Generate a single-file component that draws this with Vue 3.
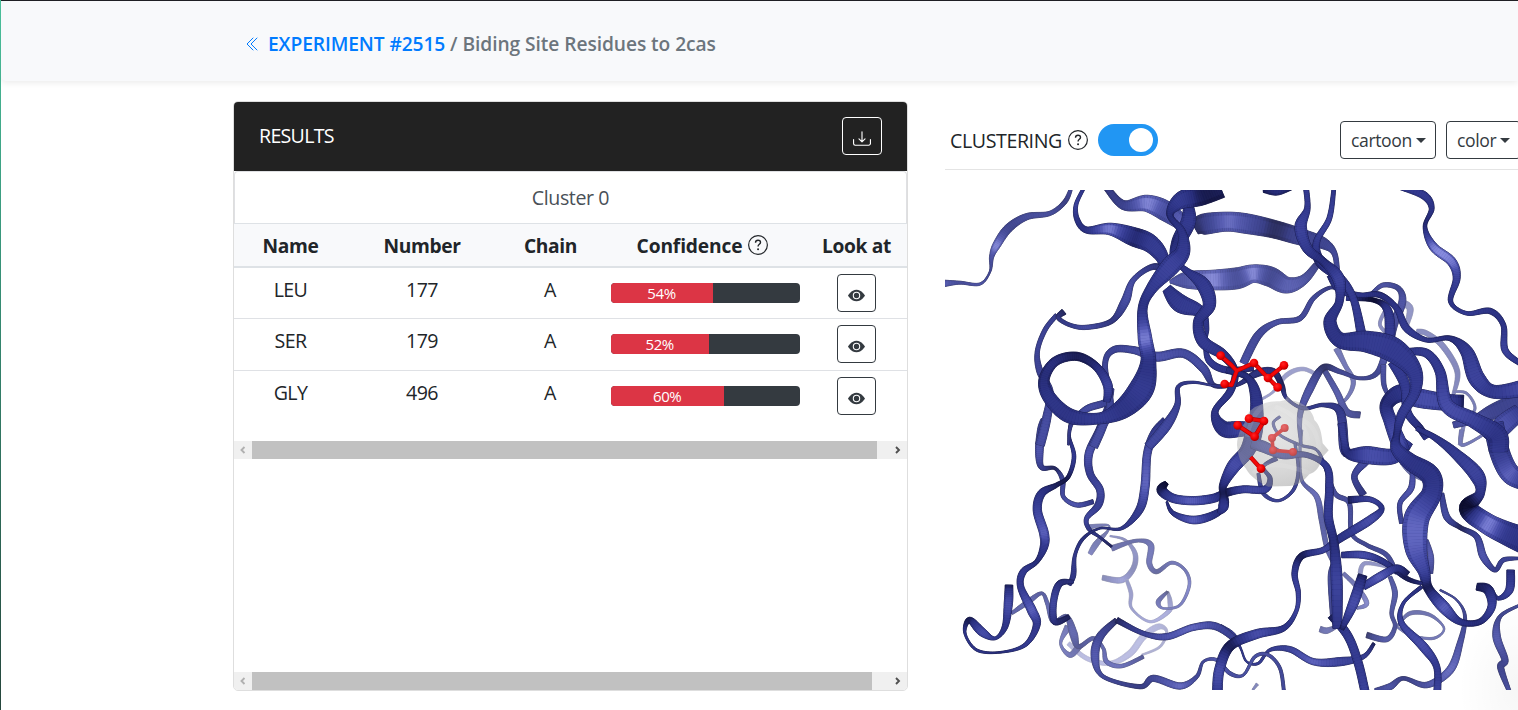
<script setup>
const rows = [
  { name: 'LEU', number: 177, chain: 'A', confidence: 54 },
  { name: 'SER', number: 179, chain: 'A', confidence: 52 },
  { name: 'GLY', number: 496, chain: 'A', confidence: 60 },
]

// Backbone ribbons, back to front: [tile, fog, "x,y,width,shade ..."].
// Tiles are the four quadrants of the viewport; shade runs from 0 (shadow) to 9 (highlight).
const tiles = [[0, 0], [840, 0], [0, 735], [840, 735]]
const strands = [
  [2, .45, '487,443,16,2 545,450,18,7 580,415,16,3 585,370,14,5 555,330,8,4 510,318,5,5'],
  [2, .35, '450,372,14,6 470,340,18,4 505,300,6,3 500,285,6,4 440,292,16,4'],
  [2, .6, '385,640,14,6 440,685,14,7 510,700,14,7 570,670,20,7 610,620,20,7 655,590,18,6 680,605,8,4 660,650,8,4 605,675,6,4'],
  [2, .5, '560,450,10,4 573,490,12,5 575,535,8,5 630,575,8,7 685,545,14,7 690,515,14,5 683,485,8,1'],
  [2, .3, '683,485,8,1 655,515,14,5 670,535,6,6 720,525,8,6 748,465,9,7 735,420,9,5 695,398,10,5 650,425,14,2 628,400,16,5 632,345,18,5 590,332,10,3 515,355,18,4'],
  [2, .3, '385,590,22,5 362,640,8,6 390,675,16,5 420,645,20,3'],
  [2, .22, '215,550,10,4 265,515,16,5 305,490,10,3 322,520,12,5 340,575,14,5 380,560,14,3 400,610,24,5 415,650,14,2 460,625,12,4 490,655,10,5 500,695,14,6 545,708,12,6 610,680,12,2'],
  [3, .45, '420,430,14,5 435,400,12,5 500,410,8,4'],
  [3, .3, '370,430,12,4 410,470,14,5 440,520,14,7 410,535,8,5'],
  [3, .3, '300,597,18,3 320,602,18,5 350,590,10,3'],
  [3, .3, '530,590,6,4 570,550,12,4 630,555,10,4 672,595,6,5 640,625,8,5 570,615,6,5 530,590,6,4'],
  [3, .4, '98,780,6,4 112,762,10,4'],
  [1, .5, '120,645,8,5 160,620,8,5 200,570,14,5 250,552,12,5 300,575,12,4'],
  [1, .4, '590,440,16,5 620,445,16,5 670,485,18,5 712,560,16,4 700,630,10,5'],
  [1, .35, '700,620,6,5 740,625,8,4 765,670,8,4 735,710,10,5 720,780,12,6'],
  [1, .45, '540,350,20,5 570,370,20,5 560,420,14,5'],
  [1, .3, '350,490,20,5 375,540,14,5 400,590,14,5 380,640,10,5 340,670,8,4'],
  [1, .4, '500,370,12,5 480,420,10,5 520,460,14,5'],
  [3, .3, '545,100,10,4 570,130,8,3 605,150,5,3'],
  [3, .3, '725,0,14,5 725,45,10,5 780,20,8,5 815,-10,14,5'],
  [3, .15, '510,440,12,4 525,490,16,5 515,550,12,4 525,590,12,3 500,628,16,5 440,615,18,1'],
  [3, .1, '180,-40,8,4 160,-20,8,4 180,15,8,4 240,45,8,4 290,60,8,4 315,110,10,4 345,190,14,4 388,220,14,4 395,310,12,4 440,345,12,3 500,375,14,4 530,430,12,3'],
  [3, .2, '245,0,8,5 240,60,8,5 245,150,10,4 290,200,16,6 305,270,16,4 320,350,14,5 340,400,10,4'],
  [3, .05, '115,130,10,3 130,190,12,4 175,212,8,4 220,180,10,4 235,120,9,4 225,40,8,4'],
  [3, .1, '345,395,16,3 330,440,12,4 338,560,14,3'],
  [1, .15, '310,550,16,2 350,620,18,5 380,680,20,4 420,690,20,2'],
  [1, .1, '455,325,10,3 490,300,14,5 535,310,16,3 547,350,22,5 520,420,26,4 500,500,24,6 470,565,16,3 420,580,10,3 360,560,14,3 310,548,20,1 270,610,24,5 240,690,16,5 243,780,8,5'],
  [1, .1, '490,540,16,5 492,600,14,4 510,640,10,3'],
  [3, .05, '435,95,26,5 403,140,18,4 430,195,22,2'],
  [3, .05, '575,95,10,3 575,170,18,6 540,220,14,5 545,280,14,4'],
  [3, .05, '665,190,14,3 680,260,20,5 720,292,14,1 770,320,18,4 790,380,22,6 825,420,14,3 850,390,14,4 900,385,8,3'],
  [3, .1, '620,330,10,4 632,380,18,6 630,430,18,3'],
  [3, .1, '660,480,6,3 710,510,6,4 735,560,10,3 720,640,18,5 690,720,24,7 620,765,18,5 550,745,12,2 510,770,20,5 465,780,10,3'],
  [3, 0, '605,470,12,2 550,520,10,4 545,580,18,5 610,650,28,6 650,710,20,4 652,785,22,5'],
  [3, .1, '900,525,8,4 840,560,12,3 830,620,24,6 855,690,20,4 842,712,20,3 868,785,12,5'],
  [3, 0, '872,420,24,2 868,480,24,5 835,505,12,3 812,480,16,3'],
  [3, .02, '0,590,16,5 40,615,14,5 62,655,6,3 80,695,6,4 115,700,8,4 150,660,10,4 210,658,18,5 280,695,20,7 360,695,26,5 430,680,14,4 462,640,10,1'],
  [2, .08, '530,570,16,1 480,620,24,4 465,680,24,6 490,740,12,4 600,770,14,2 640,745,20,4 720,768,20,7 770,740,12,4 790,695,8,4 830,690,10,6 870,730,12,5 910,735,8,5 945,680,10,5 985,675,10,5 1020,715,10,4 1032,785,10,4'],
  [2, .04, '530,570,18,1 610,610,14,4 680,620,20,6 760,592,20,7 830,590,22,5 900,640,16,3'],
  [2, .05, '315,-30,26,4 305,0,26,4 298,65,24,6 305,112,16,3 345,115,10,1 368,150,14,4 370,200,12,5 410,225,14,6 460,215,14,2'],
  [2, .03, '510,-75,26,3 480,0,26,4 447,70,24,6 450,130,22,4 480,180,22,5 475,225,22,4 440,265,14,5 448,298,12,3 480,322,8,2 515,350,8,1'],
  [2, .02, '680,-25,34,3 645,10,28,4 622,70,24,6 615,170,26,7 598,240,24,4 545,295,10,3 480,295,6,2 430,325,10,2 405,375,10,3 400,435,16,3 388,465,12,2'],
  [2, .02, '400,455,10,2 358,462,20,2 340,520,20,5 345,575,20,2 388,560,14,1'],
  [2, 0, '390,-20,6,2 388,20,8,2 402,80,12,4 385,140,12,1 350,165,14,1 305,190,24,3 292,240,26,5 312,310,28,7 312,350,24,4 290,395,14,2 250,425,20,4 242,470,20,4 275,540,28,7 290,585,22,4 255,645,12,4 180,667,6,2 110,660,8,3 75,610,8,3 88,570,18,1 125,605,26,6 165,625,10,4 195,590,18,3 205,520,26,6 207,465,24,1'],
  [1, .08, '900,650,60,3 820,680,46,3 760,705,24,5 700,720,20,4'],
  [1, .03, '900,680,50,4 850,720,60,6 810,770,50,3'],
  [1, .08, '70,535,24,5 115,450,24,4 170,412,16,5 240,400,16,4 280,340,14,4 330,308,10,2 370,320,8,3'],
  [0, .1, '15,295,20,6 60,293,10,4 120,297,8,5 150,260,6,3 155,215,14,5 170,180,24,8 205,130,26,3 260,95,20,4 330,85,14,4 375,50,14,2 395,5,10,4'],
  [0, .12, '690,290,10,5 740,285,50,5 820,285,60,8 890,280,64,4 940,266,54,8 990,275,60,3 1040,300,50,6 1090,285,30,5 1130,240,20,2'],
  [0, .08, '765,130,40,1 790,118,62,2 860,110,58,7 920,116,60,5 1000,132,54,1 1080,155,50,3 1150,175,34,3 1185,210,16,4 1192,290,18,3'],
  [0, .07, '500,8,20,2 550,60,28,3 620,55,50,8 680,80,60,5 730,120,40,7 745,150,10,3'],
  [0, .05, '300,780,28,5 320,700,26,5 330,620,20,4 300,560,20,4 292,500,14,4 315,435,14,4 350,390,14,3'],
  [0, .05, '372,380,20,1 355,398,14,2 390,420,12,3 440,427,14,5 515,408,16,2 555,350,26,5 580,285,16,5 640,245,18,2 690,265,30,3'],
  [0, .05, '385,780,6,2 395,715,12,3 440,672,20,5 500,650,20,4 516,610,14,3'],
  [0, .05, '460,785,28,5 487,725,26,5 510,660,22,4 495,540,16,4 520,495,20,4 580,495,22,5 650,515,28,6 730,505,26,5 790,550,26,5 820,600,14,2 870,603,10,3'],
  [0, .03, '625,785,28,5 680,720,30,5 712,660,18,4 715,605,12,3 760,592,8,3 830,603,6,3 890,600,10,2 950,565,22,2 1000,560,20,2 1025,600,16,1 1040,640,10,3 1090,670,10,3 1150,660,12,3 1200,680,24,3 1212,785,28,5 1222,810,20,2'],
  [0, 0, '432,8,10,3 408,60,12,5 412,105,16,3 440,135,20,3 510,132,36,8 580,155,56,2 630,175,54,4 665,215,40,4 672,260,16,2'],
  [0, 0, '680,310,30,3 720,355,54,4 780,380,34,4 800,430,14,3 795,480,10,3 810,530,20,4 860,555,20,3 940,550,16,2'],
  [1, 0, '130,18,10,1 170,16,30,2 215,10,10,1'],
  [1, 0, '540,8,12,3 610,30,24,4 635,70,16,3 615,125,12,2 640,185,26,8 695,230,28,8 710,280,22,5 692,350,14,3 740,385,12,4 810,378,18,3 850,420,16,3 855,495,20,5 900,535,16,3'],
  [3, 0, '365,-20,24,4 372,30,20,4 385,70,30,2 440,75,52,6 520,78,46,5 560,30,44,4'],
  [1, 0, '548,800,44,4 535,770,46,6 512,710,40,5 500,660,40,2 540,625,52,3 600,640,56,6 680,652,50,5 730,655,50,1'],
  [1, 0, '520,530,34,4 555,600,30,4 562,680,24,4 600,730,22,2 620,760,20,3'],
  [3, 0, '590,-5,14,3 640,20,18,3 700,65,30,4 770,135,44,5 780,190,28,3 745,235,56,0 800,280,62,8 860,310,70,4 910,330,80,3'],
  [3, .02, '820,-20,60,4 840,70,60,4 870,130,60,7 910,150,60,4'],
  [1, 0, '380,335,24,3 460,345,14,0 500,370,24,3 510,430,30,4 505,520,28,3'],
  [1, 0, '330,270,20,2 360,315,22,3 420,330,14,3 480,330,18,2 530,370,18,3 560,430,22,4 620,465,14,3 690,460,16,2 740,500,38,4 770,580,50,5 820,620,40,4 910,610,50,6'],
  [1, 0, '560,500,20,3 620,505,26,4 660,560,30,4 680,660,42,6 760,705,46,5 830,750,60,3 835,800,56,4'],
  [1, 0, '342,8,12,3 328,100,16,5 290,170,20,4 300,230,30,2 360,280,28,4 400,340,22,4 425,450,28,4'],
  [1, 0, '258,8,16,4 262,70,18,4 242,125,36,5 262,190,30,4 310,230,24,2 355,280,36,5 358,350,24,3 330,410,38,3 360,465,46,3 440,470,64,4 520,495,74,4 580,555,50,4 585,620,32,4 545,690,28,4 530,750,20,2 530,790,36,4 570,830,50,3 630,870,60,3 635,925,60,4 590,1000,76,7 588,1090,66,7 612,1160,36,5 625,1210,28,1 670,1265,36,7 720,1310,20,3 780,1310,18,2 815,1265,24,5 805,1215,30,2 770,1205,22,1'],
  [0, 0, '745,60,30,2 745,110,44,4 715,170,40,2 700,220,16,3 740,258,20,3 790,300,42,4 808,360,38,4 775,410,30,3 790,470,36,4 850,510,30,3 885,560,20,2 870,620,22,3 825,680,20,3 850,730,46,3 900,732,46,5 960,728,30,3'],
  [0, 0, '840,5,70,1 780,30,64,1 720,48,50,4 690,90,20,2 725,140,24,3 728,200,44,4 690,245,56,5 635,310,34,4 608,370,28,3 615,460,42,8 625,530,46,3 605,610,74,4 550,670,60,3 480,700,34,4 390,693,44,3 330,640,40,3 312,585,32,2 345,530,28,2 410,514,26,1 468,544,24,2 503,600,28,5 500,650,20,3'],
  [2, 0, '680,215,6,2 700,250,14,3 760,270,24,7 820,255,22,3 858,225,14,2 855,185,10,2'],
  [2, 0, '680,158,14,0 665,180,30,1 700,205,26,5 760,212,26,7 820,205,26,4 860,188,24,1 910,178,22,5 975,178,22,5 990,145,14,3 970,110,10,3 1010,85,14,3'],
  [3, 0, '-8,790,30,4 -2,720,30,6 30,648,30,1 110,612,28,6 190,595,18,3 228,545,12,5 235,490,14,5 224,430,18,4 245,378,20,1 310,360,18,5 360,325,24,3 450,270,26,6 485,235,16,3 450,208,16,5 385,210,22,1'],
  [3, 0, '365,375,18,3 430,375,22,6 490,395,18,3 560,445,14,1 605,460,10,2'],
  [3, 0, '430,470,22,4 480,440,26,7 530,415,22,3 562,435,24,1'],
  [3, 0, '335,555,28,1 385,620,26,4 415,700,26,4 435,785,26,5'],
  [1, 0, '20,555,20,2 80,575,20,2 105,620,32,3 110,690,40,3 100,750,50,3 80,800,44,4 40,845,40,6 10,900,24,2 10,930,20,1 10,965,30,4 -5,985,10,2'],
  [3, 0, '95,40,30,4 130,50,34,5 190,75,24,5 260,75,16,4 320,110,20,4 328,180,24,4 325,260,26,4 342,340,26,2 350,450,34,5 352,595,28,3'],
  [3, 0, '365,598,14,1 400,520,30,6 428,435,28,1'],
]

const palette = [[13, 14, 46], [42, 48, 126], [54, 61, 147], [76, 82, 174], [142, 146, 228]]
const toned = (shade, fog) => {
  const t = Math.max(0, Math.min(3.999, (shade / 9) * 4))
  const i = Math.floor(t)
  const k = t - i
  const rgb = palette[i].map((c, n) => {
    const mixed = c + (palette[i + 1][n] - c) * k
    return Math.round(mixed + (255 - mixed) * fog)
  })
  return `rgb(${rgb.join(',')})`
}

const spline = (a, b, c, d, t) =>
  0.5 * (2 * b + (c - a) * t + (2 * a - 5 * b + 4 * c - d) * t * t + (3 * b - a - 3 * c + d) * t * t * t)

const fmt = (p) => p[0].toFixed(1) + ' ' + p[1].toFixed(1)

const ribbons = strands.map(([tile, fog, text]) => {
  const [ox, oy] = tiles[tile]
  const pts = text.split(' ').map((s) => {
    const [x, y, w, shade] = s.split(',').map(Number)
    return [x + ox, y + oy, w, shade]
  })
  const line = []
  for (let i = 0; i < pts.length - 1; i++) {
    const a = pts[i - 1] || pts[i]
    const b = pts[i]
    const c = pts[i + 1]
    const d = pts[i + 2] || c
    const steps = 10
    for (let j = 0; j < steps; j++) line.push([0, 1, 2, 3].map((n) => spline(a[n], b[n], c[n], d[n], j / steps)))
  }
  line.push(pts[pts.length - 1])
  const sides = line.map((p, i) => {
    const q = line[Math.max(0, i - 1)]
    const r = line[Math.min(line.length - 1, i + 1)]
    const len = Math.hypot(r[0] - q[0], r[1] - q[1]) || 1
    const nx = -(r[1] - q[1]) / len
    const ny = (r[0] - q[0]) / len
    const h = Math.max(1.7, p[2] / 2 - 0.6)
    const at = (k) => [p[0] + nx * h * k, p[1] + ny * h * k]
    return { l: at(1), r: at(-1), li: at(0.65), ri: at(-0.65), shade: p[3] }
  })
  const facets = sides.slice(0, -1).map((s, i) => {
    const n = sides[i + 1]
    const shade = (s.shade + n.shade) / 2
    return {
      edge: `M${fmt(s.l)}L${fmt(n.l)}L${fmt(n.r)}L${fmt(s.r)}Z`,
      core: `M${fmt(s.li)}L${fmt(n.li)}L${fmt(n.ri)}L${fmt(s.ri)}Z`,
      dark: toned(shade * 0.86, fog),
      light: toned(shade + 0.2, fog),
    }
  })
  const outline = 'M' + sides.map((s) => fmt(s.l)).join('L') + 'L' + sides.slice().reverse().map((s) => fmt(s.r)).join('L') + 'Z'
  return { outline, line: toned(0.6, Math.min(0.8, fog * 1.4)), facets }
})

const frontAtoms = [[62, 47], [162, 69], [204, 114], [252, 76], [233, 142], [74, 132], [147, 236], [192, 243], [164, 290], [113, 256], [183, 386]]
const backAtoms = [[254, 264], [216, 294], [219, 331], [279, 336]]
</script>

<template>
  <div class="page">
    <header class="topbar">
      <svg class="back" viewBox="0 0 16 16" fill="none" stroke="currentColor" stroke-linecap="round" stroke-linejoin="round"><path d="M8 2 2 8l6 6M12 2 6 8l6 6" /></svg>
      <h1><a>EXPERIMENT #2515</a><span class="crumb"> / Biding Site Residues to 2cas</span></h1>
    </header>

    <main>
      <section class="card">
        <div class="card-head">
          <span class="results">RESULTS</span>
          <button class="download">
            <svg viewBox="0 0 16 16" fill="none" stroke="currentColor" stroke-linecap="round" stroke-linejoin="round"><path d="M.5 8.5V12A1.5 1.5 0 0 0 2 13.5h12a1.5 1.5 0 0 0 1.5-1.5V8.5M8 1.5v9M5.3 7.9 8 10.6l2.7-2.7" /></svg>
          </button>
        </div>
        <div class="cluster"><span>Cluster 0</span></div>
        <div class="grid head">
          <span>Name</span><span>Number</span><span>Chain</span>
          <span class="conf"><span>Confidence</span>
            <svg class="help" viewBox="0 0 16 16"><circle cx="8" cy="8" r="7.5" fill="none" stroke="currentColor" stroke-width=".95" /><path d="M6 6.1C6 4.8 6.8 4.2 8 4.2s2 .7 2 1.7c0 1.5-1.95 1.5-1.95 3.2" fill="none" stroke="currentColor" stroke-width="1.1" /><circle cx="8.05" cy="11.3" r=".8" fill="currentColor" /></svg>
          </span>
          <span>Look at</span>
        </div>
        <div v-for="row in rows" :key="row.number" class="grid row">
          <span class="cell">{{ row.name }}</span>
          <span class="cell">{{ row.number }}</span>
          <span class="cell">{{ row.chain }}</span>
          <div class="progress"><div class="bar" :style="{ width: row.confidence + '%' }">{{ row.confidence }}%</div></div>
          <button class="look">
            <svg viewBox="0 0 16 16" fill="currentColor"><path fill-rule="evenodd" d="M0 8s3-5.5 8-5.5S16 8 16 8s-3 5.5-8 5.5S0 8 0 8zm8 3.5a3.5 3.5 0 1 0 0-7 3.5 3.5 0 0 0 0 7z" /><circle cx="8" cy="8" r="2.5" /></svg>
          </button>
        </div>
        <div class="scroll first">
          <span class="arrow"><svg viewBox="0 0 8 8"><path d="M5.5 1 2.5 4l3 3" /></svg></span>
          <span class="thumb"></span>
          <span class="arrow end"><svg viewBox="0 0 8 8"><path d="M2 1l3 3-3 3" /></svg></span>
        </div>
        <div class="scroll last">
          <span class="arrow"><svg viewBox="0 0 8 8"><path d="M5.5 1 2.5 4l3 3" /></svg></span>
          <span class="thumb"></span>
          <span class="arrow end"><svg viewBox="0 0 8 8"><path d="M2 1l3 3-3 3" /></svg></span>
        </div>
      </section>

      <section class="viewer">
        <div class="tools">
          <span class="title">CLUSTERING</span>
          <svg class="help" viewBox="0 0 16 16"><circle cx="8" cy="8" r="7.5" fill="none" stroke="currentColor" stroke-width=".95" /><path d="M6 6.1C6 4.8 6.8 4.2 8 4.2s2 .7 2 1.7c0 1.5-1.95 1.5-1.95 3.2" fill="none" stroke="currentColor" stroke-width="1.1" /><circle cx="8.05" cy="11.3" r=".8" fill="currentColor" /></svg>
          <span class="switch"><i></i></span>
          <button class="drop cartoon"><span>cartoon</span><i></i></button>
          <button class="drop color"><span>color</span><i></i></button>
        </div>
        <svg class="scene" viewBox="15 15 1719 1500">
          <defs>
            <radialGradient id="blob" cx=".42" cy=".35" r=".7">
              <stop offset="0" stop-color="#c9c9c9" /><stop offset=".7" stop-color="#a6a6a6" /><stop offset="1" stop-color="#8a8a8a" />
            </radialGradient>
            <radialGradient id="atom" cx=".4" cy=".35" r=".65">
              <stop offset="0" stop-color="#ff2626" /><stop offset=".6" stop-color="#f20000" /><stop offset="1" stop-color="#b00000" />
            </radialGradient>
          </defs>
          <g v-for="(ribbon, i) in ribbons" :key="i">
            <path :d="ribbon.outline" :fill="ribbon.line" :stroke="ribbon.line" stroke-width="2.6" stroke-linejoin="round" />
            <path v-for="(f, j) in ribbon.facets" :key="'e' + j" :d="f.edge" :fill="f.dark" :stroke="f.dark" stroke-width=".5" />
            <path v-for="(f, j) in ribbon.facets" :key="'c' + j" :d="f.core" :fill="f.light" :stroke="f.light" stroke-width=".7" />
          </g>
          <g transform="translate(780 465)">
            <path d="M254 264 216 294 219 331 279 336" fill="none" stroke="#e40000" stroke-width="11" />
            <circle v-for="(a, i) in backAtoms" :key="i" :cx="a[0]" :cy="a[1]" r="12" fill="url(#atom)" />
            <path d="M111 315 C112 285 122 265 136 245 Q142 205 180 195 Q208 182 240 184 L256 180 Q258 170 263 168 L272 181 Q303 184 324 205 Q340 222 343 240 C360 255 365 280 368 310 L386 331 L368 350 C358 385 347 395 328 403 Q300 438 270 438 L205 440 C180 430 150 410 137 385 Q115 365 111 315Z" fill="url(#blob)" opacity=".45" />
            <path d="M140 290Q165 170 265 184M225 200Q310 230 324 300M300 240Q350 250 358 330M160 400Q200 350 330 400" fill="none" stroke="#fff" stroke-width="14" opacity=".1" />
            <path d="M62 47 94 75 110 92 162 69 204 114 252 76M204 114 233 142M110 92 95 135 74 132M147 236 192 243 164 290 113 256M152 352 183 386" fill="none" stroke="#b60000" stroke-width="13" stroke-linejoin="round" />
            <path d="M62 47 94 75 110 92 162 69 204 114 252 76M204 114 233 142M110 92 95 135 74 132M147 236 192 243 164 290 113 256M152 352 183 386" fill="none" stroke="#f20808" stroke-width="9" stroke-linejoin="round" />
            <circle v-for="(a, i) in frontAtoms" :key="i" :cx="a[0]" :cy="a[1]" r="13" fill="url(#atom)" />
          </g>
        </svg>
      </section>
    </main>
    <div class="glow"></div>
  </div>
</template>

<style>
body { margin: 0; overflow: hidden; background: #fff; }
</style>

<style scoped>
.page { position: relative; width: 1518px; height: 710px; overflow: hidden; background: #fff; color: #212529; font-family: "Open Sans", "Noto Sans", sans-serif; font-size: 19.6px; box-sizing: border-box; padding-left: 1px; }
.page::before { content: ""; position: absolute; left: 0; top: 0; width: 1px; height: 710px; background: linear-gradient(#4abf9a, #38957a 35%, #25463c); }
.page * { box-sizing: border-box; }
button { font-family: inherit; background: transparent; padding: 0; }
.topbar { height: 81px; border-top: 1px solid #1f1f24; background: #f8f9fb; border-radius: 0 0 0 5px; box-shadow: 0 2px 6px rgba(0, 0, 0, .08); display: flex; align-items: center; padding: 6px 0 0 244px; color: #007bff; }
.back { width: 16px; height: 16px; margin-right: 7px; stroke-width: 1; }
h1 { margin: 0; font-size: 19.2px; font-weight: 600; line-height: 28px; white-space: pre; letter-spacing: -.07px; }
h1 a { letter-spacing: -.1px; }
.crumb { color: #6c757d; }
main { display: flex; padding: 20px 0 0 232px; }
.card { width: 675px; height: 590px; border: 1px solid #dedede; border-radius: 5px; overflow: hidden; display: flex; flex-direction: column; flex: none; }
.card-head { height: 69px; flex: none; background: #222; color: #fff; display: flex; align-items: center; justify-content: space-between; padding: 0 25px 2px; }
.results { letter-spacing: -.7px; }
.download { width: 40px; height: 38px; border: 1px solid #fff; border-radius: 4px; color: #fff; display: grid; place-items: center; padding-top: 6px; }
.download svg { width: 18px; height: 18px; display: block; }
.cluster { height: 52px; flex: none; border: 1px solid #dfe0e3; border-bottom: 0; border-radius: 4px 4px 0 0; display: flex; align-items: center; justify-content: center; color: #495057; padding-bottom: 1px; letter-spacing: -.4px; }
.grid { display: grid; grid-template-columns: 113px 150px 106px 203px 101px; flex: none; align-items: center; justify-items: center; }
.head { height: 45px; background: #f8f9fb; border-top: 1px solid #dee2e6; border-bottom: 2px solid #dee2e6; font-weight: 700; font-size: 19.2px; letter-spacing: -.35px; }
.head > span:nth-child(3) { padding-left: 1px; }
.conf { display: flex; align-items: center; gap: 6px; margin-right: 4px; letter-spacing: -.15px; }
.help { width: 20px; height: 20px; flex: none; }
.row { height: 51px; align-items: start; border-bottom: 1px solid #dfe1e5; }
.row:nth-child(5) { height: 52px; }
.row:nth-child(6) { border-bottom-color: transparent; }
.cell { line-height: 30px; padding-top: 7px; letter-spacing: -.6px; }
.progress { width: 189px; height: 20px; margin: 15px 0 0 1px; background: #343a40; border-radius: 4px; overflow: hidden; }
.bar { height: 20px; background: #dc3545; color: #fff; font-size: 15px; line-height: 21px; text-align: center; letter-spacing: -.4px; }
.look { width: 39px; height: 38px; margin: 6px 0 0; border: 1px solid #343a40; border-radius: 4px; color: #343a40; display: grid; place-items: center; padding-top: 5px; }
.look svg { width: 17px; height: 17px; }
.scroll { height: 18px; flex: none; background: #f0f0f0; display: flex; }
.first { margin-top: 19px; }
.last { margin-top: auto; }
.thumb { width: 625px; background: #c1c1c1; }
.last .thumb { width: 620px; }
.arrow { width: 18px; display: grid; place-items: center; }
.arrow svg { width: 8px; height: 8px; fill: none; stroke: #b0b0b0; stroke-width: 1.9; margin-right: 1px; }
.arrow.end { margin-left: auto; }
.arrow.end svg { stroke: #505050; margin-right: 0; }
.viewer { margin-left: 37px; width: 573px; flex: none; }
.tools { height: 69px; border-bottom: 1px solid #e4e4e4; display: flex; align-items: center; padding: 10px 0 0 5px; overflow: hidden; }
.title { width: 113px; letter-spacing: -.4px; flex: none; white-space: nowrap; }
.tools .help { margin-left: 5px; }
.switch { width: 60px; height: 32px; border-radius: 16px; background: #2196f3; margin-left: 10px; padding: 4px 5px 0 31px; flex: none; }
.switch i { display: block; width: 24px; height: 24px; border-radius: 50%; background: #fff; }
.drop { height: 38px; border: 1px solid #343a40; border-radius: 4px; color: #343a40; font-size: 17.6px; letter-spacing: -.4px; display: flex; align-items: center; gap: 4px; padding-left: 10px; flex: none; }
.drop i { border: 5px solid transparent; border-top-color: #343a40; border-bottom: 0; }
.cartoon { width: 96px; margin-left: 182px; }
.color { width: 75px; margin-left: 10px; }
.scene { display: block; width: 573px; height: 500px; margin-top: 20px; }
.glow { position: absolute; right: 0; bottom: 0; width: 60px; height: 110px; background: radial-gradient(ellipse at 100% 80%, rgba(0, 0, 0, .035), transparent 70%); }
</style>
